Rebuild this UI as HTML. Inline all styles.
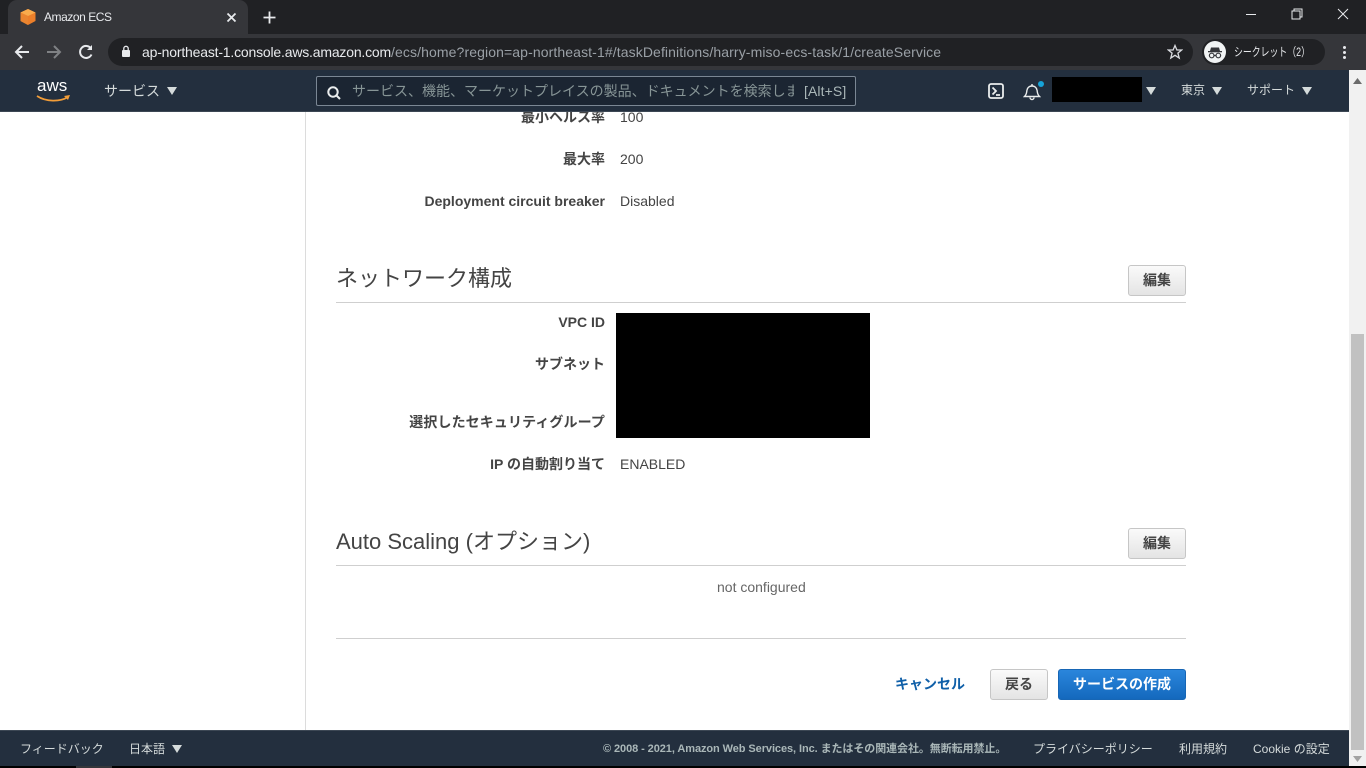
<!DOCTYPE html>
<html lang="ja">
<head>
<meta charset="utf-8">
<title>Amazon ECS</title>
<style>
html,body{margin:0;padding:0;width:1366px;height:768px;overflow:hidden;background:#fff}
body{font-family:"Liberation Sans","Noto Sans CJK JP",sans-serif;position:relative}
.a{position:absolute;white-space:nowrap}
.lb{position:absolute;right:761px;white-space:nowrap;font-size:14px;font-weight:bold;color:#444;line-height:20px}
.v{position:absolute;left:620px;white-space:nowrap;font-size:14px;color:#444;line-height:20px}
.h{position:absolute;left:336px;white-space:nowrap;font-size:22px;color:#444;line-height:30px}
.hr{position:absolute;left:336px;width:850px;height:1px;background:#cfcfcf}
.btn{position:absolute;box-sizing:border-box;border:1px solid #c6c6c6;border-radius:3px;background:linear-gradient(#fafafa,#e4e4e4);color:#444;font-size:14px;font-weight:bold;text-align:center}
.nav{color:#d5dbdb;font-size:14px;line-height:20px}
.ft{color:#d5dbdb;font-size:12px;line-height:18px}
</style>
</head>
<body>
<!-- tab strip -->
<div class="a" style="left:0;top:0;width:1366px;height:34px;background:#202124"></div>
<div class="a" style="left:8px;top:0;width:240px;height:34px;background:#35363a;border-radius:9px 9px 0 0"></div>
<svg class="a" style="left:19px;top:8px" width="18" height="18" viewBox="0 0 18 18"><path d="M9 1L1.500 4.500V13L9 17L16.500 13V4.500Z" fill="#ec7f2a"/><path d="M9 1L1.500 4.500L9 8L16.500 4.500Z" fill="#f9ab4c"/><path d="M9 8V17L1.500 13V4.500Z" fill="#ea8530"/></svg>
<div class="a" style="left:44px;top:10px;font-size:12px;line-height:15px;color:#e8eaed;letter-spacing:-.45px">Amazon ECS</div>
<svg class="a" style="left:226px;top:12px" width="11" height="11" viewBox="0 0 11 11"><path d="M1.500 1.500L9.500 9.500M9.500 1.500L1.500 9.500" stroke="#e8eaed" stroke-width="1.800"/></svg>
<svg class="a" style="left:263px;top:11px" width="13" height="13" viewBox="0 0 13 13"><path d="M6.500 0.500V12.500M0.500 6.500H12.500" stroke="#e8eaed" stroke-width="1.800"/></svg>
<!-- window controls -->
<div class="a" style="left:1246px;top:14px;width:10px;height:1px;background:#e8eaed"></div>
<svg class="a" style="left:1291px;top:8px" width="12" height="12" viewBox="0 0 12 12" fill="none" stroke="#e8eaed" stroke-width="1"><rect x="1" y="3" width="8" height="8"/><path d="M3 3V1H11V9H9"/></svg>
<svg class="a" style="left:1337px;top:8px" width="12" height="12" viewBox="0 0 12 12"><path d="M1 1L11 11M11 1L1 11" stroke="#e8eaed" stroke-width="1"/></svg>
<!-- toolbar -->
<div class="a" style="left:0;top:34px;width:1366px;height:36px;background:#35363a"></div>
<svg class="a" style="left:14px;top:44px" width="16" height="16" viewBox="0 0 16 16" fill="none" stroke="#e8eaed" stroke-width="2"><path d="M15 8H2M8 2L2 8L8 14"/></svg>
<svg class="a" style="left:46px;top:44px" width="16" height="16" viewBox="0 0 16 16" fill="none" stroke="#7f8184" stroke-width="2"><path d="M1 8H14M8 2L14 8L8 14"/></svg>
<svg class="a" style="left:78px;top:44px" width="16" height="16" viewBox="0 0 16 16" fill="none" stroke="#e8eaed" stroke-width="2"><path d="M13.500 10.500A6 6 0 1 1 13 4.500"/><path d="M14 1V6H9" fill="#e8eaed" stroke="none"/></svg>
<div class="a" style="left:108px;top:38px;width:1085px;height:28px;border-radius:14px;background:#202124"></div>
<svg class="a" style="left:121px;top:45px" width="10" height="13" viewBox="0 0 10 13"><rect x="1" y="5" width="8" height="7" rx="1" fill="#e8eaed"/><path d="M2.800 5.500V3.500A2.200 2.200 0 0 1 7.200 3.500V5.500" fill="none" stroke="#e8eaed" stroke-width="1.300"/></svg>
<div class="a" style="left:142px;top:44px;font-size:14px;line-height:17px;color:#e8eaed;letter-spacing:-.19px">ap-northeast-1.console.aws.amazon.com<span style="color:#9aa0a6;letter-spacing:.107px">/ecs/home?region=ap-northeast-1#/taskDefinitions/harry-miso-ecs-task/1/createService</span></div>
<svg class="a" style="left:1167px;top:44px" width="16" height="16" viewBox="0 0 16 16"><path d="M8 1.500L9.900 6H14.700L10.900 9.100L12.200 14L8 11.300L3.800 14L5.100 9.100L1.300 6H6.100Z" fill="none" stroke="#dadce0" stroke-width="1.300"/></svg>
<div class="a" style="left:1202px;top:39px;width:123px;height:26px;border-radius:13px;background:#202124"></div>
<div class="a" style="left:1204px;top:41px;width:22px;height:22px;border-radius:50%;background:#f1f3f4"></div>
<svg class="a" style="left:1204px;top:41px" width="22" height="22" viewBox="0 0 22 22"><path d="M7 6.500H15L16 10H6Z" fill="#35363a"/><rect x="4" y="10" width="14" height="1.300" fill="#35363a"/><g fill="none" stroke="#35363a" stroke-width="1.200"><circle cx="7.700" cy="14.500" r="2.300"/><circle cx="14.300" cy="14.500" r="2.300"/><path d="M10 14.500H12"/></g></svg>
<div class="a" style="left:1234px;top:44px;font-size:12px;line-height:17px;color:#e8eaed;transform:scaleX(.74);transform-origin:0 0">シークレット（2）</div>
<div class="a" style="left:1343px;top:46px;width:3px;height:3px;border-radius:50%;background:#e8eaed;box-shadow:0 5px 0 #e8eaed,0 10px 0 #e8eaed"></div>
<!-- console nav -->
<div class="a" style="left:0;top:70px;width:1349px;height:41px;background:#232f3e"></div>
<div class="a" style="left:0;top:111px;width:1349px;height:1px;background:#3c4754"></div>
<div class="a" style="left:37px;top:76px;font-size:17px;line-height:20px;color:#fff">aws</div>
<svg class="a" style="left:36px;top:94px" width="35" height="10" viewBox="0 0 35 10"><path d="M1 2C10 8 24 8 32 3" fill="none" stroke="#f29d38" stroke-width="1.700"/><path d="M28 2L34 1L32 6Z" fill="#f29d38"/></svg>
<div class="a nav" style="left:104px;top:81px">サービス</div>
<svg class="a" style="left:167px;top:87px" width="10" height="8" viewBox="0 0 10 8"><path d="M0 0H10L5 8Z" fill="#d5dbdb"/></svg>
<div class="a" style="left:316px;top:76px;width:540px;height:30px;box-sizing:border-box;border:1px solid #7b8794;border-radius:2px;background:#1b2532"></div>
<svg class="a" style="left:326px;top:85px" width="16" height="16" viewBox="0 0 16 16" fill="none" stroke="#eaeded" stroke-width="2"><circle cx="7" cy="7" r="4.700"/><path d="M10.500 10.500L14 14"/></svg>
<div class="a" style="left:352px;top:81px;width:442px;overflow:hidden;font-size:14px;line-height:20px;color:#879596">サービス、機能、マーケットプレイスの製品、ドキュメントを検索します</div>
<div class="a" style="left:804px;top:82px;font-size:14px;line-height:18px;color:#aab7b8;letter-spacing:.1px">[Alt+S]</div>
<svg class="a" style="left:988px;top:83px" width="16" height="16" viewBox="0 0 16 16" fill="none" stroke="#eaeded" stroke-width="1.800"><rect x="1" y="1" width="14" height="14" rx="2"/><path d="M4.500 4.500L8 8L4.500 11.500M8 12H12"/></svg>
<svg class="a" style="left:1023px;top:83px" width="18" height="18" viewBox="0 0 18 18" fill="none" stroke="#eaeded" stroke-width="1.400"><path d="M1.500 13.500C4 11 3.500 9 4 7C4.500 4.500 6.500 3 9 3C11.500 3 13.500 4.500 14 7C14.500 9 14 11 16.500 13.500Z"/><path d="M7 14.500A2 2 0 0 0 11 14.500M9 1V3"/></svg>
<div class="a" style="left:1038px;top:81px;width:6px;height:6px;border-radius:50%;background:#16a3d8"></div>
<div class="a" style="left:1052px;top:77px;width:90px;height:25px;background:#000"></div>
<svg class="a" style="left:1146px;top:87px" width="10" height="8" viewBox="0 0 10 8"><path d="M0 0H10L5 8Z" fill="#d5dbdb"/></svg>
<div class="a" style="left:1181px;top:80px;font-size:12px;line-height:20px;color:#d5dbdb">東京</div>
<svg class="a" style="left:1212px;top:87px" width="10" height="8" viewBox="0 0 10 8"><path d="M0 0H10L5 8Z" fill="#d5dbdb"/></svg>
<div class="a" style="left:1247px;top:80px;font-size:12px;line-height:20px;color:#d5dbdb">サポート</div>
<svg class="a" style="left:1302px;top:87px" width="10" height="8" viewBox="0 0 10 8"><path d="M0 0H10L5 8Z" fill="#d5dbdb"/></svg>
<!-- content -->
<div class="a" style="left:0;top:112px;width:1349px;height:618px;overflow:hidden;background:#fff">
  <div class="a" style="left:305px;top:0;width:1px;height:618px;background:#dcdcdc"></div>
  <div class="lb" style="top:-5px;right:744px">最小ヘルス率</div>
  <div class="v" style="top:-5px">100</div>
</div>
<div class="lb" style="top:149px">最大率</div><div class="v" style="top:149px">200</div>
<div class="lb" style="top:191px">Deployment circuit breaker</div><div class="v" style="top:191px">Disabled</div>
<div class="h" style="top:264px">ネットワーク構成</div>
<div class="btn" style="left:1128px;top:265px;width:58px;height:31px;line-height:29px">編集</div>
<div class="hr" style="top:302px"></div>
<div class="lb" style="top:312px">VPC ID</div>
<div class="lb" style="top:354px">サブネット</div>
<div class="a" style="left:616px;top:313px;width:254px;height:125px;background:#000"></div>
<div class="lb" style="top:412px;letter-spacing:.1px">選択したセキュリティグループ</div>
<div class="lb" style="top:454px">IP の自動割り当て</div><div class="v" style="top:454px">ENABLED</div>
<div class="h" style="top:527px">Auto Scaling (オプション)</div>
<div class="btn" style="left:1128px;top:528px;width:58px;height:31px;line-height:29px">編集</div>
<div class="hr" style="top:565px"></div>
<div class="a" style="left:717px;top:577px;font-size:14px;line-height:20px;color:#666">not configured</div>
<div class="hr" style="top:638px"></div>
<div class="a" style="left:895px;top:674px;font-size:14px;font-weight:bold;line-height:20px;color:#0f5fa8">キャンセル</div>
<div class="btn" style="left:990px;top:669px;width:58px;height:31px;line-height:29px">戻る</div>
<div class="btn" style="left:1058px;top:669px;width:128px;height:31px;line-height:29px;border-color:#1766b5;background:linear-gradient(#2a86dc,#1469bd);color:#fff">サービスの作成</div>
<!-- footer -->
<div class="a" style="left:0;top:730px;width:1349px;height:36px;background:#232f3e;border-top:1px solid #3c4754;box-sizing:border-box"></div>
<div class="a" style="left:0;top:766px;width:1366px;height:2px;background:#000"></div>
<div class="a" style="left:76px;top:766px;width:36px;height:2px;background:#35363a"></div>
<div class="a ft" style="left:20px;top:740px">フィードバック</div>
<div class="a ft" style="left:129px;top:740px">日本語</div>
<svg class="a" style="left:172px;top:745px" width="10" height="8" viewBox="0 0 10 8"><path d="M0 0H10L5 8Z" fill="#d5dbdb"/></svg>
<div class="a" style="left:603px;top:740px;font-size:11px;font-weight:bold;line-height:18px;color:#aab7b8;letter-spacing:-.08px">© 2008 - 2021, Amazon Web Services, Inc. またはその関連会社。無断転用禁止。</div>
<div class="a ft" style="left:1033px;top:740px">プライバシーポリシー</div>
<div class="a ft" style="left:1179px;top:740px">利用規約</div>
<div class="a ft" style="left:1253px;top:740px">Cookie の設定</div>
<!-- scrollbar -->
<div class="a" style="left:1349px;top:70px;width:17px;height:696px;background:#f1f1f1"></div>
<div class="a" style="left:1351px;top:334px;width:13px;height:416px;background:#c1c1c1"></div>
<svg class="a" style="left:1353px;top:78px" width="9" height="6" viewBox="0 0 9 6"><path d="M4.500 0L9 6H0Z" fill="#6b6b6b"/></svg>
<svg class="a" style="left:1353px;top:756px" width="9" height="6" viewBox="0 0 9 6"><path d="M0 0H9L4.500 6Z" fill="#a3a3a3"/></svg>
</body>
</html>
